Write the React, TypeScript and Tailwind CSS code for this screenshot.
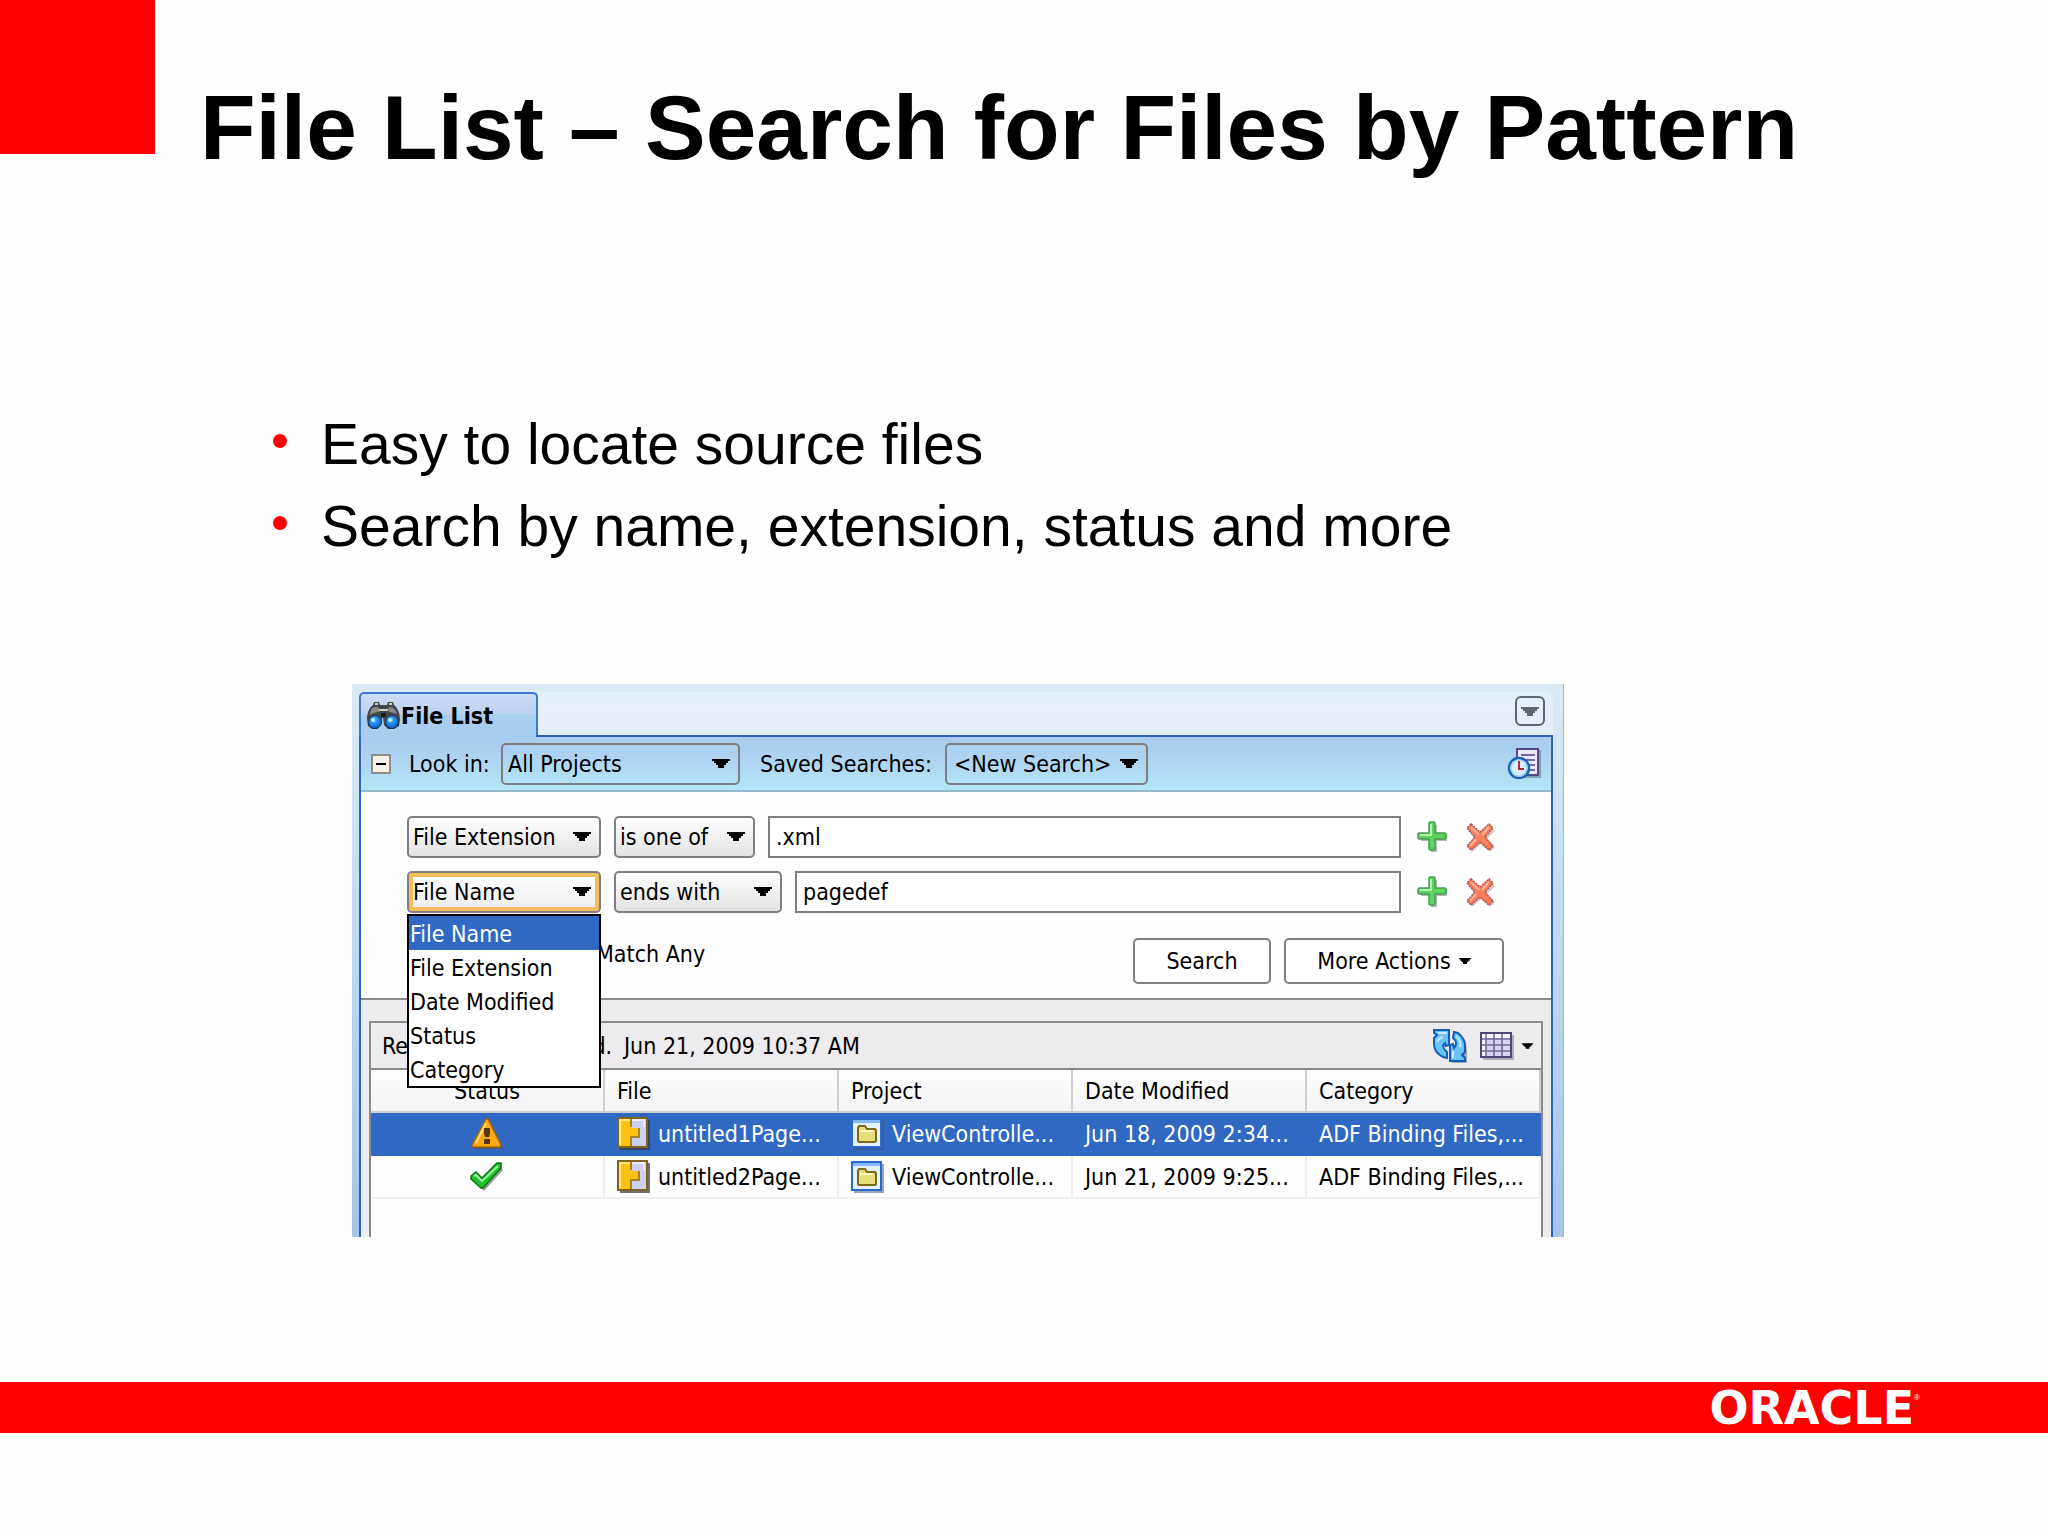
import { ReactNode } from "react"

const fileTypes = ["File Name", "File Extension", "Date Modified", "Status", "Category"]

const rows = [
  {
    status: "warning",
    file: "untitled1Page...",
    project: "ViewControlle...",
    modified: "Jun 18, 2009 2:34...",
    category: "ADF Binding Files,...",
    selected: true,
  },
  {
    status: "ok",
    file: "untitled2Page...",
    project: "ViewControlle...",
    modified: "Jun 21, 2009 9:25...",
    category: "ADF Binding Files,...",
    selected: false,
  },
]

function Caret({ className = "" }: { className?: string }) {
  return (
    <svg viewBox="0 0 18 9" className={className} aria-hidden="true">
      <path d="M0 0h18v2h-2v2h-2v2h-2v3H6V6H4V4H2V2H0z" fill="currentColor" />
    </svg>
  )
}

function BinocularsIcon() {
  return (
    <svg viewBox="0 0 33 30" className="h-[30px] w-[33px]" aria-hidden="true">
      <defs>
        <radialGradient id="lens" cx="0.4" cy="0.35" r="0.7">
          <stop offset="0" stopColor="#b5e4ff" />
          <stop offset="0.3" stopColor="#2a9bf5" />
          <stop offset="1" stopColor="#0757c4" />
        </radialGradient>
      </defs>
      <path
        d="M7 1h5l1 3h7l1-3h5l1 3c3 2 6 8 6 14l-1 7-5 3h-6l-4-4-1-7h-1l-1 7-4 4H5l-4-3-1-7C0 12 2 7 6 4z"
        fill="#45484a"
      />
      <path d="M4 9c2-3 5-4 8-2v4c-3 0-6 1-9 3zM21 7c4-2 7 0 9 6-2-1-5-2-8-2z" fill="#8b8f88" />
      <path d="M8 2h3v2H8zM22 2h3v2h-3zM12 8h9v2h-9z" fill="#cdcfc8" />
      <path d="M14 12h5v4h-5z" fill="#15191d" />
      <circle cx="8" cy="21" r="6.5" fill="url(#lens)" stroke="#1d2f4a" />
      <circle cx="25" cy="21" r="6.5" fill="url(#lens)" stroke="#1d2f4a" />
      <circle cx="6" cy="19" r="2" fill="#c5e8ff" />
      <circle cx="23" cy="19" r="2" fill="#c5e8ff" />
    </svg>
  )
}

function HistoryIcon() {
  return (
    <svg viewBox="0 0 34 34" className="size-[34px]" aria-hidden="true">
      <path d="M12 3h22v28H12z" fill="#5f7896" opacity="0.6" />
      <path d="M10 2h21v26H10z" fill="#ece8fa" stroke="#564a86" strokeWidth="2" />
      <path d="M14 8h14M14 13h14M21 18h7M22 23h6" stroke="#7468ad" strokeWidth="2" />
      <circle cx="13" cy="22" r="10" fill="#4a6482" opacity="0.5" />
      <circle cx="12" cy="21" r="10" fill="#d5effb" stroke="#1b62b8" strokeWidth="2.5" />
      <circle cx="12" cy="21" r="8" fill="none" stroke="#9dd5f2" strokeWidth="1.5" />
      <path d="M12 14v8h5" fill="none" stroke="#b4283a" strokeWidth="2" />
    </svg>
  )
}

function PlusIcon() {
  return (
    <svg viewBox="0 0 32 32" className="size-8" aria-hidden="true">
      <path d="M14 4h6v9h10v7H20v11h-6V20H4v-5h10z" fill="#b4b8b4" />
      <path
        d="M13 1h4l1 1v10h10l1 1v4l-1 1H18v10l-1 1h-4l-1-1V18H2l-1-1v-4l1-1h10V2z"
        fill="#5bd65a"
        stroke="#4a9a56"
        strokeWidth="1.5"
      />
      <path d="M14 3v11H3" fill="none" stroke="#b4f3ae" strokeWidth="2" />
    </svg>
  )
}

function RemoveIcon() {
  return (
    <svg viewBox="0 0 32 32" className="size-8" aria-hidden="true">
      <path d="M7 5l9 8 9-8 5 5-8 8 8 8-5 5-9-8-9 8-4-5 8-8-8-8z" fill="#cfc8c8" />
      <path
        d="M6 3l9 8 9-8 4 4-8 9 8 9-4 4-9-8-9 8-4-4 8-9-8-9z"
        fill="#fb7f5c"
        stroke="#b0524e"
        strokeWidth="1.5"
        strokeDasharray="2 1"
      />
      <path d="M6 6l8 8M24 6l-7 8M5 25l6-7" stroke="#ffb294" strokeWidth="2" />
    </svg>
  )
}

function RefreshIcon() {
  return (
    <svg viewBox="0 0 34 34" className="size-[34px]" aria-hidden="true">
      <path d="M19 34h15V22l-1-9-7-8v9l-4 6zM4 20l10 10v-6z" fill="#a3a5ac" />
      <path
        d="M1 1h15v15l-3 1-1-3c-3 2-2 6 2 9v6l-4-1C4 25 1 20 1 15V9l3-3-3-2z"
        fill="#6cc3fa"
        stroke="#0f5fbd"
        strokeWidth="2"
      />
      <path
        d="M32 32H17V16l3-1 1 4c3-3 3-7-1-10l1-6 4 1c5 4 7 8 7 13v6l-3 3 3 3z"
        fill="#6cc3fa"
        stroke="#0f5fbd"
        strokeWidth="2"
      />
      <path d="M5 4h9M4 13c1-3 3-4 6-5M23 7c4 3 5 7 4 11M20 22v7" fill="none" stroke="#c5ebff" strokeWidth="2" />
    </svg>
  )
}

function GridIcon() {
  return (
    <svg viewBox="0 0 34 28" className="h-7 w-[34px]" aria-hidden="true">
      <path d="M3 3h31v25H3z" fill="#b1afb6" />
      <path d="M1 1h30v24H1z" fill="#d9d5f3" stroke="#4e4677" strokeWidth="2" />
      <path d="M2 2h28v4H2zM2 2h4v22H2z" fill="#f4f2fd" />
      <path d="M2 7h28M2 13h28M2 19h28M6 2v22M14 2v22M22 2v22" stroke="#6e6698" strokeWidth="1.5" />
    </svg>
  )
}

function WarningIcon() {
  return (
    <svg viewBox="0 0 32 32" className="size-8" aria-label="Warning">
      <path d="M17 3l15 28H3z" fill="#4b4b4b" opacity="0.6" />
      <path d="M15 1h2l13 26-1 2H2l-1-2z" fill="#fdab12" stroke="#a86400" strokeWidth="1.5" />
      <path d="M15 5L5 25" stroke="#ffdf83" strokeWidth="2" />
      <path d="M13 10h6v6l-1 3h-4l-1-3zM13 21h6v5h-6z" fill="#5a3500" />
    </svg>
  )
}

function CheckIcon() {
  return (
    <svg viewBox="0 0 34 30" className="h-[30px] w-[34px]" aria-label="OK">
      <path d="M3 17l5-4 6 6L30 3l3 5-19 21z" fill="#9a9d9a" />
      <path
        d="M1 14l5-4 6 6L27 1h4v5L13 26h-2L1 17z"
        fill="#1fc32c"
        stroke="#0c7514"
        strokeWidth="1.5"
      />
      <path d="M4 14l2-1 6 6L28 4" fill="none" stroke="#9df29b" strokeWidth="2" />
    </svg>
  )
}

function PageDefIcon() {
  return (
    <svg viewBox="0 0 33 33" className="size-[33px] shrink-0" aria-hidden="true">
      <path d="M3 3h30v30H3z" fill="#33343b" opacity="0.7" />
      <path d="M1 1h29v29H1z" fill="#cdd0f2" stroke="#7f6420" strokeWidth="2" />
      <path d="M2 2h12v9h8v9h-8v9H2z" fill="#fdc20f" />
      <path d="M14 2v8M22 11v9h-8v9" fill="none" stroke="#a8821c" strokeWidth="2" />
      <path d="M15 3h12v7" fill="none" stroke="#eceefc" strokeWidth="2" />
      <path d="M3 28V3h10" fill="none" stroke="#ffe680" strokeWidth="2" />
    </svg>
  )
}

function ProjectIcon() {
  return (
    <svg viewBox="0 0 33 32" className="h-8 w-[33px] shrink-0" aria-hidden="true">
      <path d="M3 3h30v29H3z" fill="#34507d" opacity="0.5" />
      <path d="M1 1h29v28H1z" fill="#e3f2fe" stroke="#2d69cd" strokeWidth="2" />
      <path d="M2 2h27v3H2z" fill="#86b6f5" />
      <path
        d="M7 10l1-2h6l2 3h8l1 1v11l-1 1H8l-1-1z"
        fill="#e8de7d"
        stroke="#7b6a16"
        strokeWidth="2"
      />
      <path d="M9 13h13" stroke="#fdf8c4" strokeWidth="2" />
    </svg>
  )
}

function SelectBox({
  label,
  options,
  className,
  children,
}: {
  label: string
  options: string[]
  className: string
  children?: ReactNode
}) {
  return (
    <div className="relative shrink-0">
      <select
        aria-label={label}
        className={`block h-[42px] appearance-none rounded-[5px] border-2 border-[#7f7f82] pr-8 ${className}`}
      >
        {options.map((o) => (
          <option key={o}>{o}</option>
        ))}
      </select>
      <Caret className="pointer-events-none absolute top-4 right-[10px] h-[9px] w-[18px]" />
      {children}
    </div>
  )
}

function CriteriaRow({ children, value, label }: { children: ReactNode; value: string; label: string }) {
  return (
    <div className="flex items-center pr-[54px]">
      <div className="flex gap-[13px]">{children}</div>
      <input
        type="text"
        aria-label={label}
        defaultValue={value}
        className="ml-[13px] h-[42px] min-w-0 flex-1 border-2 border-[#7f7f82] bg-white px-[6px]"
      />
      <button aria-label="Add criterion" className="ml-4">
        <PlusIcon />
      </button>
      <button aria-label="Remove criterion" className="ml-4">
        <RemoveIcon />
      </button>
    </div>
  )
}

function FileListPanel() {
  return (
    <section className="border-r border-[#a9b4bf] bg-linear-to-b from-[#dbebf5] via-[#bdd8f0] to-[#a6c6e8] pt-2 pr-[10px] pl-[7px] font-['DejaVu_Sans_Condensed','DejaVu_Sans',sans-serif] text-[23px] leading-8 text-black">
      {/* tab strip */}
      <div className="flex h-[43px] items-start rounded-tr-lg bg-linear-to-b from-[#e2f0f8] via-[#e8eef8] to-[#e2edf6]">
        <div className="flex h-[45px] w-[179px] items-center gap-px rounded-t-[5px] border-2 border-b-0 border-[#3d78cb] bg-linear-to-b from-[#cddcf6] from-0% via-[#bfd2f1] via-45% to-[#a9cdef] to-50% pl-[6px] font-bold">
          <BinocularsIcon />
          File List
        </div>
        <button
          aria-label="Panel menu"
          className="mt-1 mr-[8px] ml-auto flex size-[30px] items-center justify-center rounded-md border-2 border-[#5f666d] text-[#5f666d]"
        >
          <Caret className="h-[9px] w-[18px]" />
        </button>
      </div>

      <div className="border-x-2 border-[#2f63bd]">
        {/* the tab covers the left part of this line */}
        <div className="flex">
          <div className="h-[2px] w-[175px] bg-[#a9cdef]" />
          <div className="h-[2px] flex-1 bg-[#2f5fb8]" />
        </div>

        <div className="flex h-[55px] items-center border-b-2 border-[#94b9c9] bg-linear-to-b from-[#a8cbee] via-[#afd6f2] to-[#b1e8f7] pr-[10px] pl-[10px]">
          <button
            aria-label="Collapse search"
            className="flex size-5 items-center justify-center border-2 border-[#8f8d86] bg-[#f4f2e8]"
          >
            <span className="h-[2px] w-[10px] bg-black" />
          </button>
          <span className="ml-[18px] w-[92px] whitespace-nowrap">Look in:</span>
          <SelectBox label="Look in" options={["All Projects"]} className="w-[239px] bg-transparent pl-[5px]" />
          <span className="ml-5 w-[185px] whitespace-nowrap">Saved Searches:</span>
          <SelectBox label="Saved Searches" options={["<New Search>"]} className="w-[203px] bg-transparent pl-[7px]" />
          <button aria-label="Search history" className="ml-auto">
            <HistoryIcon />
          </button>
        </div>

        {/* criteria */}
        <div className="bg-[#fefefe] pt-6 pb-[14px] pl-[46px]">
          <div className="flex flex-col gap-[13px]">
            <CriteriaRow label="File extension value" value=".xml">
              <SelectBox
                label="Field 1"
                options={["File Extension"]}
                className="w-[194px] bg-linear-to-b from-white to-[#e3e2e4] pl-[4px]"
              />
              <SelectBox
                label="Operator 1"
                options={["is one of"]}
                className="w-[141px] bg-linear-to-b from-white to-[#e3e2e4] pl-[4px]"
              />
            </CriteriaRow>
            <CriteriaRow label="File name value" value="pagedef">
              <SelectBox
                label="Field 2"
                options={["File Name"]}
                className="w-[194px] bg-linear-to-b from-white to-[#ececee] pl-[4px] inset-ring-4 inset-ring-[#f4bd5c]"
              >
                <ul
                  role="listbox"
                  className="absolute top-full left-0 z-10 mt-px w-full border-2 border-black bg-white leading-9"
                >
                  {fileTypes.map((t, i) => (
                    <li
                      key={t}
                      role="option"
                      aria-selected={i === 0}
                      className={`h-[34px] pl-px ${i === 0 ? "bg-[#3069c4] text-white" : ""}`}
                    >
                      {t}
                    </li>
                  ))}
                </ul>
              </SelectBox>
              <SelectBox
                label="Operator 2"
                options={["ends with"]}
                className="w-[168px] bg-linear-to-b from-white to-[#e3e2e4] pl-[4px]"
              />
            </CriteriaRow>
          </div>

          <div className="mt-[25px] flex items-start pr-[47px]">
            <label className="flex w-[160px] items-center gap-2 whitespace-nowrap">
              <input type="radio" name="match" defaultChecked />
              Match All
            </label>
            <label className="flex items-center gap-4 whitespace-nowrap">
              <input type="radio" name="match" />
              Match Any
            </label>
            <button className="ml-auto h-[46px] w-[138px] rounded-[5px] border-2 border-[#7f7f82] bg-white">
              Search
            </button>
            <button className="ml-[13px] flex h-[46px] w-[220px] items-center justify-center gap-2 rounded-[5px] border-2 border-[#7f7f82] bg-white">
              More Actions
              <Caret className="h-[6px] w-[12px]" />
            </button>
          </div>
        </div>

        {/* results */}
        <div className="border-t-2 border-[#8a898c] bg-[#edebed] px-2 pt-[21px]">
          <div className="border-2 border-b-0 border-[#8a898c] bg-[#fefefe] pb-[38px]">
            <div className="flex h-[47px] items-center border-b-2 border-[#8a898c] bg-[#edebed] pr-2 pl-[11px]">
              <span className="w-[232px] whitespace-nowrap">Results last refreshed.</span>
              <span className="ml-[10px] whitespace-nowrap">Jun 21, 2009 10:37 AM</span>
              <button aria-label="Refresh" className="ml-auto">
                <RefreshIcon />
              </button>
              <button aria-label="Columns" className="ml-[13px] flex items-center gap-2">
                <GridIcon />
                <Caret className="h-[6px] w-[11px]" />
              </button>
            </div>
            <table className="w-full table-fixed border-separate border-spacing-0 text-left whitespace-nowrap">
              <thead>
                <tr className="h-[43px] bg-linear-to-b from-white to-[#f3f2f4] *:border-r-2 *:border-b-2 *:border-[#cfced1] *:p-0 *:pl-3 *:font-normal">
                  <th>
                    <div className="pr-3 text-center">Status</div>
                  </th>
                  <th>File</th>
                  <th>Project</th>
                  <th>Date Modified</th>
                  <th>Category</th>
                </tr>
              </thead>
              <tbody>
                {rows.map((r) => (
                  <tr
                    key={r.file}
                    className={`h-[43px] *:border-r-2 *:border-b-2 *:p-0 *:pl-3 ${
                      r.selected
                        ? "bg-[#3069c4] text-white *:border-[#3069c4]"
                        : "*:border-[#f0eff1]"
                    }`}
                  >
                    <td>
                      <div className="flex justify-center pr-3">
                        {r.status === "warning" ? <WarningIcon /> : <CheckIcon />}
                      </div>
                    </td>
                    <td>
                      <div className="flex items-center gap-2">
                        <PageDefIcon />
                        {r.file}
                      </div>
                    </td>
                    <td>
                      <div className="flex items-center gap-2">
                        <ProjectIcon />
                        {r.project}
                      </div>
                    </td>
                    <td>{r.modified}</td>
                    <td>{r.category}</td>
                  </tr>
                ))}
              </tbody>
            </table>
          </div>
        </div>
      </div>
    </section>
  )
}

export default function App() {
  return (
    <div className="min-h-screen bg-[#fefefe] font-['Liberation_Sans',Arial,sans-serif] text-black">
      <header className="flex items-start">
        <div className="h-[154px] w-[155px] shrink-0 bg-[#ff0000]" />
        <h1 className="pt-[76px] pl-[45px] text-[91px] leading-[104px] font-bold">
          File List – Search for Files by Pattern
        </h1>
      </header>

      <main>
        <ul className="mt-[223px] pl-[273px] text-[57px] leading-[82px]">
          {["Easy to locate source files", "Search by name, extension, status and more"].map((line) => (
            <li key={line} className="flex items-center gap-[34px]">
              <span className="mb-[6px] size-[14px] rounded-full bg-[#ff0000]" />
              {line}
            </li>
          ))}
        </ul>
        <div className="mt-[117px] mr-[484px] ml-[352px]">
          <FileListPanel />
        </div>
      </main>

      <footer className="mt-[145px] flex h-[51px] items-center justify-end bg-[#ff0000] pr-[128px] text-white">
        <span className="font-['DejaVu_Sans',sans-serif] text-[46px] leading-none font-bold">ORACLE</span>
        <span className="mb-5 text-[8px] leading-none">®</span>
      </footer>
    </div>
  )
}
